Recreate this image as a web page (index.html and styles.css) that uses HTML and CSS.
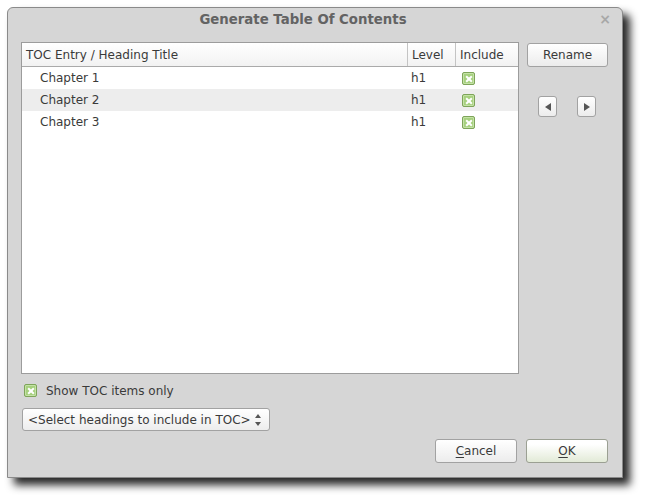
FILE: index.html
```
<!DOCTYPE html>
<html>
<head>
<meta charset="utf-8">
<link rel="stylesheet" href="styles.css">
</head>
<body>
<div class="window">
  <div class="titlebar">
    <span class="title">Generate Table Of Contents</span>
    <span class="close">×</span>
  </div>
  <div class="content">
    <div class="main">
      <div class="table">
        <div class="row head">
          <div class="c1">TOC Entry / Heading Title</div>
          <div class="c2">Level</div>
          <div class="c3">Include</div>
        </div>
        <div class="row">
          <div class="c1 indent">Chapter 1</div>
          <div class="c2">h1</div>
          <div class="c3"><span class="check"></span></div>
        </div>
        <div class="row alt">
          <div class="c1 indent">Chapter 2</div>
          <div class="c2">h1</div>
          <div class="c3"><span class="check"></span></div>
        </div>
        <div class="row">
          <div class="c1 indent">Chapter 3</div>
          <div class="c2">h1</div>
          <div class="c3"><span class="check"></span></div>
        </div>
      </div>
      <div class="side">
        <div class="btn rename">Rename</div>
        <div class="arrows">
          <div class="btn arrow"><span class="tri left"></span></div>
          <div class="btn arrow"><span class="tri right"></span></div>
        </div>
      </div>
    </div>
    <div class="showrow">
      <span class="check"></span>
      <span class="label">Show TOC items only</span>
    </div>
    <div class="select">
      <span>&lt;Select headings to include in TOC&gt;</span>
      <span class="spin"><span class="up"></span><span class="down"></span></span>
    </div>
    <div class="buttons">
      <div class="btn dlg"><u>C</u>ancel</div>
      <div class="btn dlg ok"><u>O</u>K</div>
    </div>
  </div>
</div>
</body>
</html>
```
FILE: styles.css
```
html, body {
  margin: 0;
  padding: 0;
  background: #ffffff;
}
body {
  font-family: "DejaVu Sans", sans-serif;
  font-size: 12px;
  color: #3a3a3a;
  width: 647px;
  height: 502px;
  overflow: hidden;
}
.window {
  margin: 7px 0 0 7px;
  width: 616px;
  height: 471px;
  box-sizing: border-box;
  background: #d6d6d6;
  border: 1px solid #8a8a8a;
  border-radius: 6px 6px 0 0;
  box-shadow: 7px 7px 9px rgba(0, 0, 0, 0.85);
  display: flex;
  flex-direction: column;
}
.titlebar {
  height: 34px;
  position: relative;
  display: flex;
  justify-content: center;
  align-items: flex-start;
}
.title {
  margin-top: 4px;
  font-weight: bold;
  font-size: 13.3px;
  color: #636363;
  margin-left: -24px;
}
.close {
  position: absolute;
  right: 11px;
  top: 3px;
  font-size: 14px;
  color: #a8a8a8;
  font-weight: bold;
}
.content {
  padding: 0 14px 0 13px;
  display: flex;
  flex-direction: column;
}
.main {
  display: flex;
  gap: 8px;
}
.table {
  width: 498px;
  height: 332px;
  box-sizing: border-box;
  border: 1px solid #9c9c9c;
  background: #ffffff;
}
.row {
  display: flex;
  height: 22px;
  align-items: center;
}
.row.alt {
  background: #ededed;
}
.row.head {
  height: 23px;
  border-bottom: 1px solid #aaaaaa;
  background: linear-gradient(#ffffff, #f2f2f2);
  align-items: stretch;
}
.row.head > div {
  display: flex;
  align-items: center;
}
.c1 {
  width: 385px;
  padding-left: 4px;
  box-sizing: border-box;
}
.c1.indent {
  padding-left: 18px;
}
.c2 {
  width: 48px;
  padding-left: 4px;
  box-sizing: border-box;
}
.c3 {
  flex: 1;
  padding-left: 4px;
  box-sizing: border-box;
}
.row.head .c2, .row.head .c3 {
  border-left: 1px solid #c4c4c4;
}
.row .c3 .check {
  margin-left: 3px;
}
.check {
  display: inline-block;
  width: 13px;
  height: 13px;
  box-sizing: border-box;
  border: 1px solid #7ea45a;
  border-radius: 2px;
  background: #a6d07e;
  box-shadow: inset 0 0 0 1px #c4e2a6;
  position: relative;
  vertical-align: middle;
}
.check::before, .check::after {
  content: "";
  position: absolute;
  left: 1.5px;
  top: 4.5px;
  width: 8px;
  height: 2px;
  background: #ffffff;
  transform: rotate(45deg);
}
.check::after {
  transform: rotate(-45deg);
}
.side {
  width: 81px;
  display: flex;
  flex-direction: column;
}
.btn {
  box-sizing: border-box;
  border: 1px solid #a2a2a2;
  border-radius: 3px;
  background: linear-gradient(#ffffff, #ececec);
  display: flex;
  align-items: center;
  justify-content: center;
  color: #3a3a3a;
}
.rename {
  margin-top: 1px;
  height: 24px;
}
.arrows {
  display: flex;
  gap: 20px;
  margin-top: 29px;
  padding-left: 11px;
}
.arrow {
  width: 19px;
  height: 21px;
}
.tri {
  width: 0;
  height: 0;
  border-top: 4px solid transparent;
  border-bottom: 4px solid transparent;
}
.tri.left {
  border-right: 6px solid #555555;
}
.tri.right {
  border-left: 6px solid #555555;
}
.showrow {
  display: flex;
  align-items: center;
  margin-top: 10px;
  height: 13px;
  padding-left: 3px;
}
.showrow .label {
  margin-left: 9px;
}
.select {
  margin-top: 11px;
  margin-left: 1px;
  width: 248px;
  height: 23px;
  box-sizing: border-box;
  border: 1px solid #a2a2a2;
  border-radius: 3px;
  background: linear-gradient(#ffffff, #ededed);
  display: flex;
  align-items: center;
  justify-content: space-between;
  padding: 0 8px 0 5px;
}
.spin {
  display: flex;
  flex-direction: column;
  gap: 4px;
}
.spin .up, .spin .down {
  width: 0;
  height: 0;
  border-left: 3px solid transparent;
  border-right: 3px solid transparent;
}
.spin .up {
  border-bottom: 4px solid #555555;
}
.spin .down {
  border-top: 4px solid #555555;
}
.buttons {
  display: flex;
  justify-content: flex-end;
  gap: 9px;
  margin-top: 8px;
}
.dlg {
  width: 82px;
  height: 24px;
}
.dlg.ok {
  background: linear-gradient(#ffffff 20%, #e2ead7);
  border-color: #9ba093;
}
u {
  text-decoration: underline;
  text-underline-offset: 2px;
}
```
